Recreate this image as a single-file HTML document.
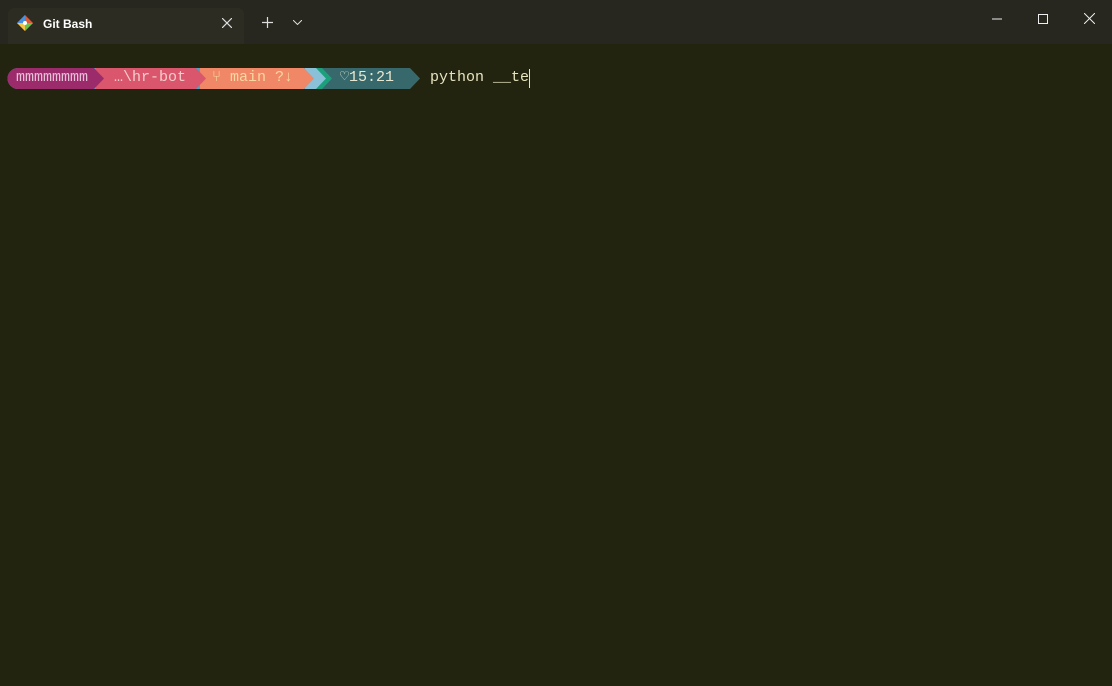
<!DOCTYPE html>
<html><head><meta charset="utf-8"><style>
html,body{margin:0;padding:0;width:1112px;height:686px;overflow:hidden;background:#25261a;font-family:"Liberation Sans",sans-serif}
.title{position:absolute;left:0;top:0;width:1112px;height:44px;background:#27271f}
.tab{position:absolute;left:8px;top:8px;width:236px;height:36px;background:#2c2c22;border-radius:6px 6px 0 0}
.tab .t{position:absolute;left:35px;top:9px;color:#fff;font-size:12px;font-weight:bold}
.term{position:absolute;left:0;top:44px;width:1112px;height:642px;background:#23240f}
.mono{font-family:"Liberation Mono",monospace;font-size:15px;position:absolute;top:69px;line-height:18px}
</style></head><body>
<div class="title"></div>
<div class="tab">
<svg style="position:absolute;left:9px;top:7px" width="16" height="16" viewBox="0 0 16 16">
<path d="M8 0L16 8 8 16 0 8Z" fill="#e05a3a"/><path d="M8 8L16 8 8 16Z" fill="#6cc04a"/><path d="M0 8L8 8 8 16Z" fill="#f2c641"/><path d="M0 8L8 0 8 8Z" fill="#4a8fe0"/>
<circle cx="8" cy="8" r="2" fill="#fff"/></svg>
<div class="t">Git Bash</div>
<svg style="position:absolute;left:214px;top:10px" width="10" height="10"><path d="M0 0L10 10M10 0L0 10" stroke="#ddd" stroke-width="1.2"/></svg>
</div>
<svg style="position:absolute;left:262px;top:17px" width="11" height="11"><path d="M5.5 0V11M0 5.5H11" stroke="#ddd" stroke-width="1.2"/></svg>
<svg style="position:absolute;left:293px;top:20px" width="9" height="5"><path d="M0 0L4.5 4.5 9 0" stroke="#ddd" fill="none"/></svg>
<svg style="position:absolute;left:992px;top:18px" width="10" height="2"><path d="M0 1H10" stroke="#eee"/></svg>
<svg style="position:absolute;left:1038px;top:14px" width="10" height="10"><rect x=".5" y=".5" width="9" height="9" stroke="#eee" fill="none"/></svg>
<svg style="position:absolute;left:1084px;top:13px" width="11" height="11"><path d="M0 0L11 11M11 0L0 11" stroke="#eee"/></svg>
<div class="term"></div>
<svg style="position:absolute;left:0;top:68px" width="430" height="21">
<path d="M18 0H330L320 10.5 330 21H18A10.5 10.5 0 0 1 18 0Z" fill="#4aa4c8"/>
<path d="M312 0H326L336 10.5 326 21H312Z" fill="#1aa07a"/>
<path d="M322 0H410L420 10.5 410 21H322L332 10.5Z" fill="#37686c"/>
<path d="M305 0H316L326 10.5 316 21H305Z" fill="#8ac0d8"/>
<path d="M200 0H304L314 10.5 304 21H200Z" fill="#f08766"/>
<path d="M96 0H196L206 10.5 196 21H96Z" fill="#d9566c"/>
<path d="M18 0H94L104 10.5 94 21H18A10.5 10.5 0 0 1 18 0Z" fill="#9c2b6c"/>
</svg>
<div class="mono" style="left:16px;color:#e8c0d8">mmmmmmmm</div>
<div class="mono" style="left:114px;color:#f4cccc">…\hr-bot</div>
<div class="mono" style="left:212px;color:#f8d8a0">⑂ main ?↓</div>
<div class="mono" style="left:340px;color:#e8e8d0">♡15:21</div>
<div class="mono" style="left:430px;color:#e6e4c0">python __te</div>
<div style="position:absolute;left:529px;top:69px;width:1px;height:19px;background:#e6e4c0"></div>
</body></html>
